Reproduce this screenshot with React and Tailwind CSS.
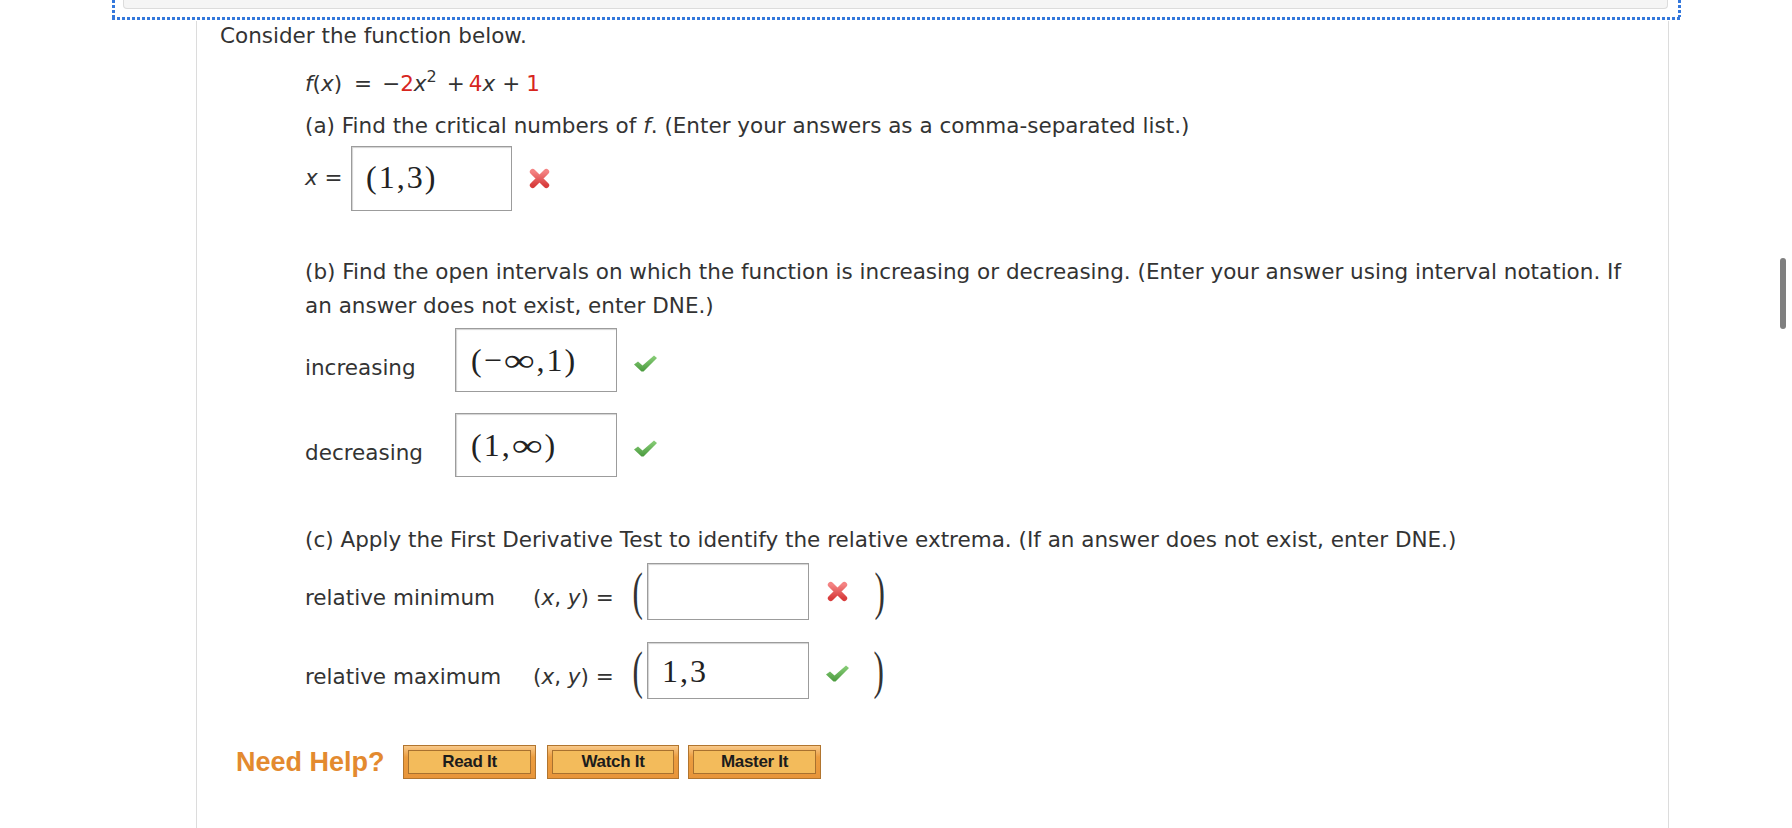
import React from 'react';

const XMark = () => (
  <svg width="23" height="21" viewBox="0 0 22 20">
    <defs>
      <linearGradient id="xg" x1="0" y1="0" x2="0" y2="1">
        <stop offset="0" stopColor="#f48383" />
        <stop offset="1" stopColor="#d83d3d" />
      </linearGradient>
    </defs>
    <path d="M4.5 3.5 L17.5 16.5 M17.5 3.5 L4.5 16.5" stroke="url(#xg)" strokeWidth="5.5" strokeLinecap="round" fill="none" />
  </svg>
);

const CheckMark = () => (
  <svg width="25" height="19" viewBox="0 0 25 18">
    <defs>
      <linearGradient id="cg" x1="0" y1="0" x2="0" y2="1">
        <stop offset="0" stopColor="#8bd07a" />
        <stop offset="1" stopColor="#4a9a3e" />
      </linearGradient>
    </defs>
    <path d="M1 10 L5 7 L9.5 11 L21 1 L24 3.5 L10.5 17 L8.5 17 Z" fill="url(#cg)" />
  </svg>
);

const MathBox = ({ children, className = '' }) => (
  <div
    className={`flex items-center pl-[14px] border border-[#9c9c9c] shadow-[inset_1px_1px_1px_rgba(0,0,0,0.18)] bg-white font-['Liberation_Serif',serif] text-[32px] leading-none text-[#222] tracking-[2px] ${className}`}
  >
    {children}
  </div>
);

const BigParen = ({ children, className = '' }) => (
  <span className={`inline-block font-['Liberation_Serif',serif] text-[52px] leading-none text-[#333] scale-x-[0.6] ${className}`}>
    {children}
  </span>
);

const Inf = () => <span className="inline-block mx-[4px] scale-x-[1.35]">∞</span>;

const HelpButton = ({ label, className = '' }) => (
  <button
    type="button"
    className={`h-[34px] p-[4px] border border-[#b1752f] bg-[linear-gradient(#f8c98a,#ec9d3f_35%,#e8953a)] ${className}`}
  >
    <div className="h-full flex items-center justify-center border border-[#a8712f] bg-[#f3bb5b] font-['Liberation_Sans',Arial,sans-serif] font-bold text-[17px] tracking-[-0.3px] text-[#1c1c1c]">
      {label}
    </div>
  </button>
);

export default function App() {
  return (
    <div className="relative w-full h-[828px] overflow-hidden bg-white font-['DejaVu_Sans',Verdana,sans-serif] text-[21.5px] text-[#333]">
      {/* focus outline + collapsed box above */}
      <div className="ml-[112px] w-[1569px]">
        <div className="flex h-[17px]">
          <div className="w-[3px] bg-[repeating-linear-gradient(180deg,#3478dc_0_3px,transparent_3px_5px)]" />
          <div className="flex-1 pl-[8px] pr-[10px]">
            <div className="h-[9px] bg-[#f5f5f5] border border-t-0 border-[#dcdcdc] rounded-b-[4px]" />
          </div>
          <div className="w-[3px] bg-[repeating-linear-gradient(180deg,#3478dc_0_3px,transparent_3px_5px)]" />
        </div>
        <div className="h-[3px] bg-[repeating-linear-gradient(90deg,#3478dc_0_3px,transparent_3px_5px)]" />
      </div>

      <div className="ml-[196px] w-[1473px] h-[808px] border-x border-[#dcdcdc] pl-[23px]">
        <p className="mt-px h-[30px] leading-[30px]">Consider the function below.</p>

        <div className="ml-[85px]">
          <p className="mt-[18px] h-[30px] leading-[30px] whitespace-nowrap">
            <i>f</i>(<i>x</i>)<span className="ml-[12px] mr-[10px]">=</span>−<span className="text-[#d7261e]">2</span><i>x</i>
            <span className="relative -top-[9px] text-[16px] leading-none">2</span>
            <span className="ml-[10px] mr-[4px]">+</span>
            <span className="text-[#d7261e]">4</span><i>x</i>
            <span className="ml-[7px] mr-[6px]">+</span>
            <span className="text-[#d7261e]">1</span>
          </p>

          <p className="mt-[12px] h-[30px] leading-[30px]">
            (a) Find the critical numbers of <i>f</i>. (Enter your answers as a comma-separated list.)
          </p>

          <div className="mt-[5px] flex items-center h-[65px]">
            <span className="w-[46px]"><i>x</i> =</span>
            <MathBox className="w-[161px] h-[65px] pb-[3px]">(1,3)</MathBox>
            <span className="ml-[16px] flex"><XMark /></span>
          </div>

          <p className="mt-[44px] leading-[34px] whitespace-nowrap">
            (b) Find the open intervals on which the function is increasing or decreasing. (Enter your answer using interval notation. If
            <br />
            an answer does not exist, enter DNE.)
          </p>

          <div className="mt-[5px] flex items-center h-[64px]">
            <span className="w-[150px] pt-[16px]">increasing</span>
            <MathBox className="w-[162px] h-[64px] pl-[15px]">(−<Inf />,1)</MathBox>
            <span className="ml-[16px] pt-[6px] flex"><CheckMark /></span>
          </div>

          <div className="mt-[21px] flex items-center h-[64px]">
            <span className="w-[150px] pt-[16px]">decreasing</span>
            <MathBox className="w-[162px] h-[64px] pl-[15px]">(1,<Inf />)</MathBox>
            <span className="ml-[16px] pt-[6px] flex"><CheckMark /></span>
          </div>

          <p className="mt-[48px] h-[30px] leading-[30px]">
            (c) Apply the First Derivative Test to identify the relative extrema. (If an answer does not exist, enter DNE.)
          </p>

          <div className="mt-[8px] flex items-center h-[57px]">
            <span className="w-[228px] pt-[14px]">relative minimum</span>
            <span className="w-[96px] pt-[14px] whitespace-nowrap">(<i>x</i>, <i>y</i>) =</span>
            <BigParen className="w-[18px]">(</BigParen>
            <MathBox className="w-[162px] h-[57px]" />
            <span className="ml-[17px] flex"><XMark /></span>
            <BigParen className="ml-[22px]">)</BigParen>
          </div>

          <div className="mt-[22px] flex items-center h-[57px]">
            <span className="w-[228px] pt-[14px]">relative maximum</span>
            <span className="w-[96px] pt-[14px] whitespace-nowrap">(<i>x</i>, <i>y</i>) =</span>
            <BigParen className="w-[18px]">(</BigParen>
            <MathBox className="w-[162px] h-[57px]">1,3</MathBox>
            <span className="ml-[16px] pt-[6px] flex"><CheckMark /></span>
            <BigParen className="ml-[20px]">)</BigParen>
          </div>
        </div>

        <div className="mt-[46px] ml-[16px] flex items-center h-[34px]">
          <span className="w-[167px] font-['Liberation_Sans',Arial,sans-serif] font-bold text-[27px] text-[#e38a2f]">Need Help?</span>
          <HelpButton label="Read It" className="w-[133px]" />
          <HelpButton label="Watch It" className="ml-[11px] w-[132px]" />
          <HelpButton label="Master It" className="ml-[9px] w-[133px]" />
        </div>
      </div>

      <div className="absolute left-[1780px] top-[258px] w-[6px] h-[71px] rounded-full bg-[#7f7f7f]" />
    </div>
  );
}
